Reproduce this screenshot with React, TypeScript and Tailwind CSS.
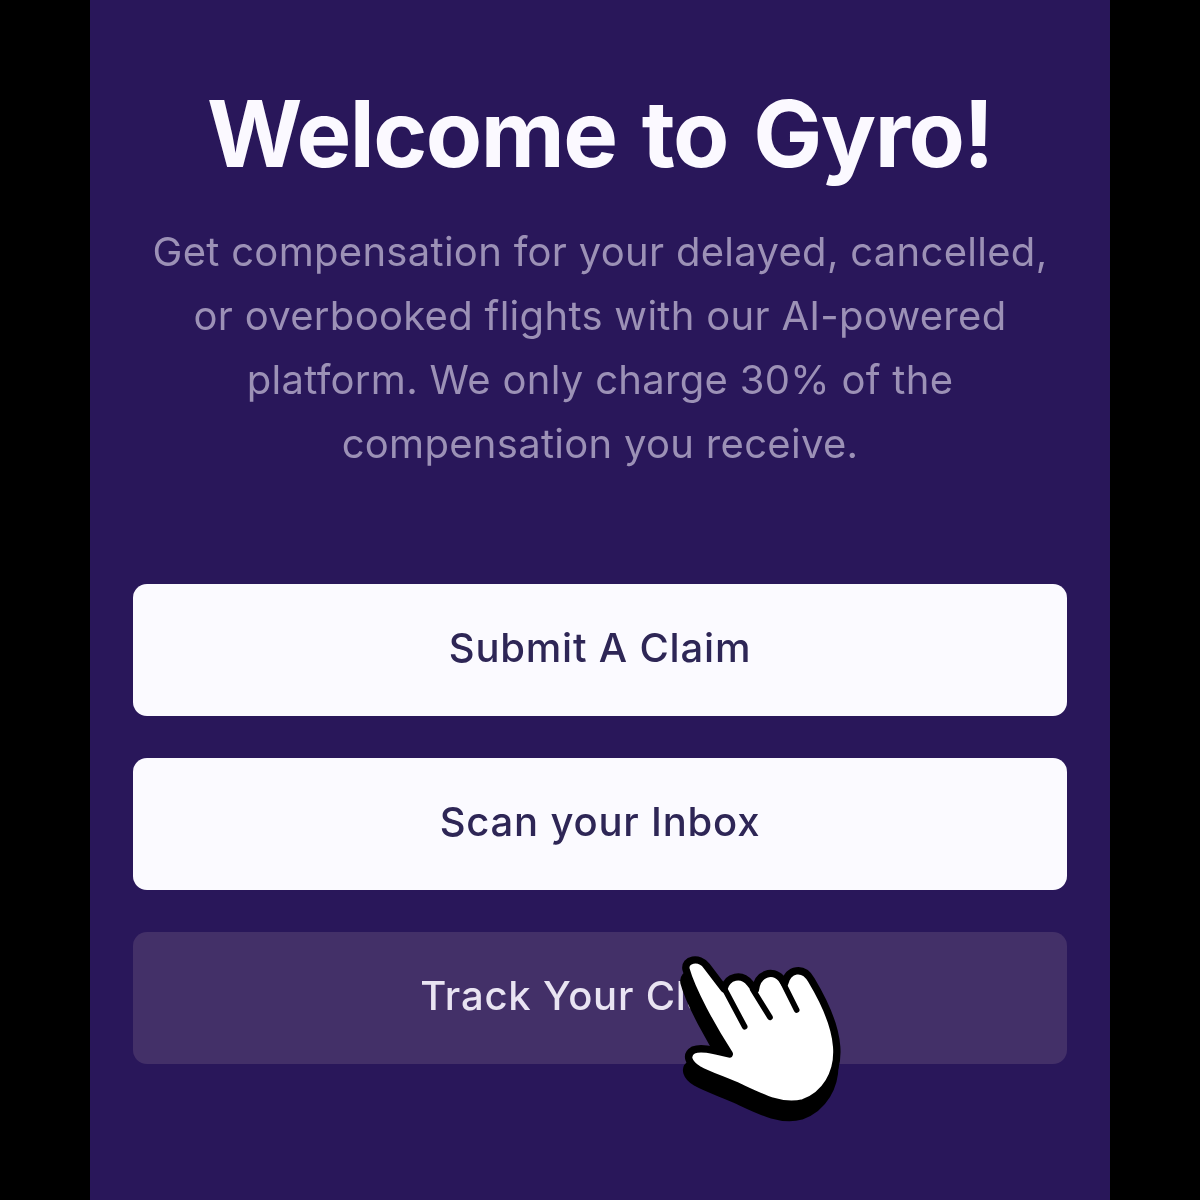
import React from 'react'

const white = 'M138 118 C132 88 178 78 200 108 L252 176 C262 138 305 128 330 160 L346 180 C352 130 398 116 424 146 L434 160 C445 116 490 108 514 150 C550 210 585 280 590 350 C596 430 555 495 490 518 C430 535 370 505 300 472 C250 450 205 435 175 418 C145 400 135 375 160 360 C185 350 225 362 268 372 C215 290 155 180 138 118 Z'

function HandCursor() {
  return (
    <svg
      viewBox="0 0 720 600"
      className="pointer-events-none absolute left-[550px] top-[930px] h-[200px] w-[240px] blur-[0.4px]"
    >
      <path d={white} transform="translate(-6 40)" fill="#000" stroke="#000" strokeWidth="22" strokeLinejoin="round" />
      <path d={white} fill="#fff" stroke="#000" strokeWidth="22" strokeLinejoin="round" />
      <path d="M250 170 L314 290 M338 178 L390 262 M428 156 L470 240" fill="none" stroke="#000" strokeWidth="17" strokeLinecap="round" />
    </svg>
  )
}

const buttonClass =
  'flex h-[132px] items-center justify-center rounded-[14px] pb-[4px] text-[40px] font-medium tracking-[0.8px] blur-[0.3px]'

export default function App() {
  return (
    <div className="h-[1200px] overflow-hidden bg-black font-['Inter',sans-serif]">
      <div className="relative mx-auto h-full w-[1020px] bg-[#29175a] px-[43px] pt-[84px]">
        <h1 className="text-center text-[92px] leading-[100px] font-bold tracking-[-1.5px] [word-spacing:5px] text-[#fbf9ff] blur-[0.6px]">
          Welcome to Gyro!
        </h1>
        <p className="mt-[36px] text-center text-[40px] leading-[64px] tracking-[0.3px] text-[#9c91b6] blur-[0.6px]">
          Get compensation for your delayed, cancelled,
          <br />
          or overbooked flights with our AI-powered
          <br />
          platform. We only charge 30% of the
          <br />
          compensation you receive.
        </p>
        <div className="mt-[108px] flex flex-col gap-[42px]">
          <button className={`${buttonClass} bg-[#fbfaff] text-[#2e2656]`}>Submit A Claim</button>
          <button className={`${buttonClass} bg-[#fbfaff] text-[#2e2656]`}>Scan your Inbox</button>
          <button className={`${buttonClass} bg-[#433068] text-[#e9e4f2]`}>Track Your Claims</button>
        </div>
        <HandCursor />
      </div>
    </div>
  )
}
